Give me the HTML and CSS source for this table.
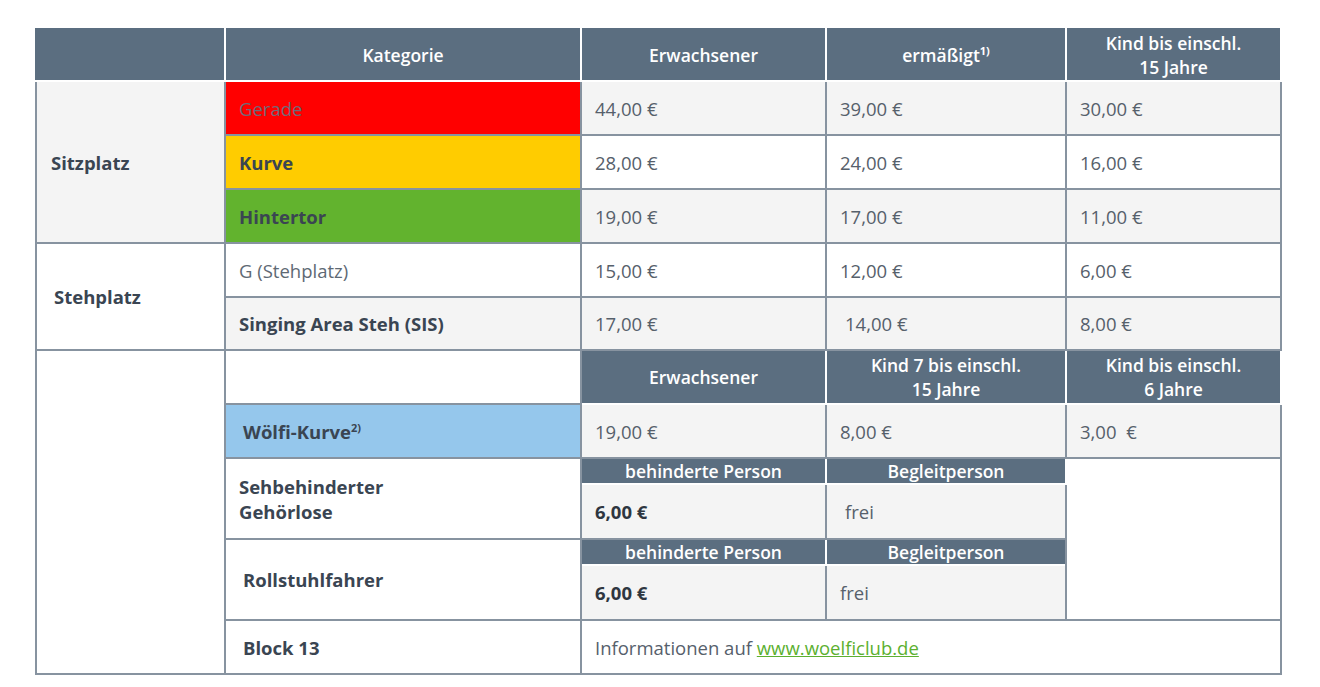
FILE: index.html
```html
<!DOCTYPE html>
<html lang="de">
<head>
<meta charset="utf-8">
<title>Preise</title>
<link rel="stylesheet" href="styles.css">
</head>
<body>
<div class="page">
<table class="prices">
  <colgroup>
    <col class="c1"><col class="c2"><col class="c3"><col class="c4"><col class="c5">
  </colgroup>
  <tr class="r-head">
    <th></th>
    <th>Kategorie</th>
    <th>Erwachsener</th>
    <th>ermäßigt<sup>1)</sup></th>
    <th>Kind bis einschl.<br>15 Jahre</th>
  </tr>
  <tr class="r-std grey">
    <td rowspan="3" class="group grey">Sitzplatz</td>
    <td class="cat red">Gerade</td>
    <td>44,00 €</td><td>39,00 €</td><td>30,00 €</td>
  </tr>
  <tr class="r-std">
    <td class="cat yellow strong">Kurve</td>
    <td>28,00 €</td><td>24,00 €</td><td>16,00 €</td>
  </tr>
  <tr class="r-std grey">
    <td class="cat green strong">Hintertor</td>
    <td>19,00 €</td><td>17,00 €</td><td>11,00 €</td>
  </tr>
  <tr class="r-std">
    <td rowspan="2" class="group white shift">Stehplatz</td>
    <td class="cat plain">G (Stehplatz)</td>
    <td>15,00 €</td><td>12,00 €</td><td>6,00 €</td>
  </tr>
  <tr class="r-short grey">
    <td class="cat strong">Singing Area Steh (SIS)</td>
    <td>17,00 €</td><td class="nudge">14,00 €</td><td>8,00 €</td>
  </tr>
  <tr class="r-std">
    <td rowspan="7" class="group white"></td>
    <td class="white"></td>
    <th>Erwachsener</th>
    <th>Kind 7 bis einschl.<br>15 Jahre</th>
    <th>Kind bis einschl.<br>6 Jahre</th>
  </tr>
  <tr class="r-std grey">
    <td class="cat blue strong indent">Wölfi-Kurve<sup>2)</sup></td>
    <td>19,00 €</td><td>8,00 €</td><td>3,00 &nbsp;€</td>
  </tr>
  <tr class="r-sub">
    <td rowspan="2" class="cat strong white two">Sehbehinderter<br>Gehörlose</td>
    <th>behinderte Person</th>
    <th>Begleitperson</th>
    <td rowspan="4" class="white"></td>
  </tr>
  <tr class="r-val grey">
    <td class="strong dark">6,00 €</td>
    <td class="nudge">frei</td>
  </tr>
  <tr class="r-sub">
    <td rowspan="2" class="cat strong white indent">Rollstuhlfahrer</td>
    <th>behinderte Person</th>
    <th>Begleitperson</th>
  </tr>
  <tr class="r-val grey">
    <td class="strong dark">6,00 €</td>
    <td>frei</td>
  </tr>
  <tr class="r-std">
    <td class="cat strong white indent">Block 13</td>
    <td colspan="3" class="white">Informationen auf <a href="#">www.woelficlub.de</a></td>
  </tr>
</table>
</div>
</body>
</html>
```
FILE: styles.css
```css
html, body {
  margin: 0;
  padding: 0;
  background: #ffffff;
}

.page {
  padding: 28px 0 0 35px;
}

.prices {
  border-collapse: collapse;
  table-layout: fixed;
  width: 1245px;
  font-family: "Open Sans", "Lato", sans-serif;
  font-size: 18.5px;
  color: #56606b;
}

.c1 { width: 189px; }
.c2 { width: 356px; }
.c3 { width: 245px; }
.c4 { width: 240px; }
.c5 { width: 215px; }

.r-head { height: 52px; }
.r-std { height: 54px; }
.r-short { height: 53px; }
.r-sub { height: 26px; }
.r-val { height: 55px; }

th {
  background: #5b6e80;
  color: #ffffff;
  font-size: 17.5px;
  font-weight: 600;
  text-align: center;
  line-height: 24px;
  padding: 0 6px;
  border: 2px solid #ffffff;
}

.r-head th:first-child {
  border-left-color: #5b6e80;
}

.r-head th {
  border-top-color: #5b6e80;
}

.r-sub th {
  line-height: 22px;
  padding: 0;
}

td {
  border: 2px solid #8793a0;
  padding: 0 0 0 13px;
  vertical-align: middle;
  white-space: nowrap;
}

tr.grey td { background: #f4f4f4; }
td.grey { background: #f4f4f4; }
tr td.white, td.white { background: #ffffff; }

td.group {
  font-weight: 700;
  color: #3a4552;
  padding-left: 14px;
}
td.group.shift { padding-left: 17px; }

td.cat { color: #3a4552; }
td.strong { font-weight: 700; color: #3a4552; }
td.plain { color: #5e6974; }
td.dark { color: #2e3640; }

td.red { background: #ff0000 !important; color: #6e6a78; }
td.yellow { background: #ffcc00 !important; }
td.green { background: #62b32e !important; }
td.blue { background: #95c7ec !important; }

td.indent { padding-left: 17px; }
td.two { line-height: 25px; }
td.nudge { padding-left: 18px; }

sup {
  font-size: 11px;
  font-weight: 700;
  vertical-align: 7px;
  line-height: 0;
}

a {
  color: #5cb030;
  text-decoration: underline;
}
```
